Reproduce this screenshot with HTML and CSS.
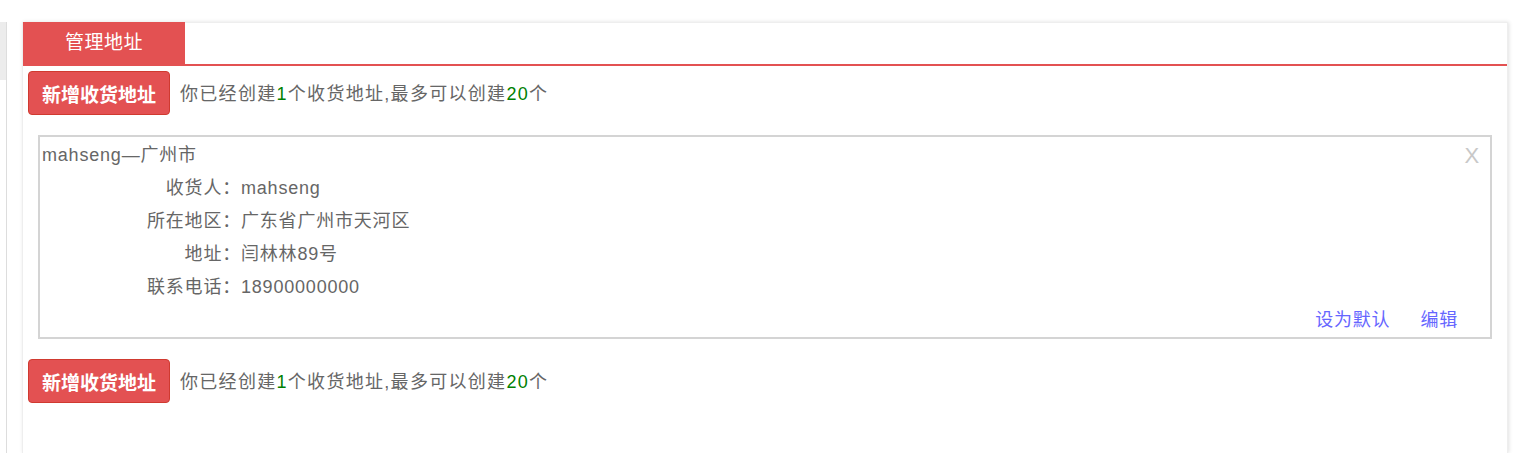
FILE: index.html
```html
<!DOCTYPE HTML>
<html>
<head>
	<meta http-equiv="Content-Type" content="text/html; charset=utf-8">
	<title>管理地址</title>
	<link rel="stylesheet" href="styles.css">
</head>
<body>
	<aside class="side">
		<div class="side-head"></div>
	</aside>

	<section class="panel">
		<div class="tabs">
			<div class="tab">管理地址</div>
		</div>

		<div class="bar">
			<button class="btn-add">新增收货地址</button>
			<span class="tip">你已经创建<em>1</em>个收货地址,最多可以创建<em>20</em>个</span>
		</div>

		<div class="addr">
			<div class="addr-title">
				<span>mahseng—广州市</span>
				<span class="close">X</span>
			</div>
			<div class="addr-row"><label>收货人：</label><span>mahseng</span></div>
			<div class="addr-row"><label>所在地区：</label><span>广东省广州市天河区</span></div>
			<div class="addr-row"><label>地址：</label><span>闫林林89号</span></div>
			<div class="addr-row"><label>联系电话：</label><span>18900000000</span></div>
			<div class="addr-ops">
				<a>设为默认</a>
				<a>编辑</a>
			</div>
		</div>

		<div class="bar">
			<button class="btn-add">新增收货地址</button>
			<span class="tip">你已经创建<em>1</em>个收货地址,最多可以创建<em>20</em>个</span>
		</div>
	</section>
</body>
</html>
```

FILE: styles.css
```css
	body{
		margin: 0;
		background-color: #fff;
		display: flex;
		padding-top: 22px;
		height: 431px;
		overflow: hidden;
		font-family: "Liberation Sans", "Noto Sans CJK SC", sans-serif;
		color: #666;
	}

	.side{
		width: 6px;
		border-right: 1px solid #ddd;
		margin-right: 15px;
	}
	.side-head{
		height: 58px;
		background: #ececec;
	}

	.panel{
		width: 1484px;
		border: 1px solid #eee;
		border-bottom: 0;
		box-shadow: 1px 0 4px rgba(0,0,0,0.12);
	}

	.tabs{
		display: flex;
		height: 41px;
		border-bottom: 2px solid #e35152;
	}
	.tab{
		width: 162px;
		background: #e35152;
		color: #fff;
		font-size: 19px;
		letter-spacing: 0.5px;
		line-height: 42px;
		text-align: center;
		margin-top: -1px;
		height: 42px;
	}

	.bar{
		display: flex;
		align-items: center;
		padding: 5px 0 0 5px;
	}
	.btn-add{
		width: 142px;
		height: 44px;
		padding: 0;
		background: #e35152;
		border: 1px solid #d03a30;
		border-radius: 4px;
		color: #fff;
		font-family: "Liberation Serif", "Noto Sans CJK SC", serif;
		font-weight: bold;
		font-size: 19px;
	}
	.tip{
		margin-left: 10px;
		font-size: 18px;
		letter-spacing: 1.3px;
		margin-top: -3px;
	}
	.tip em{
		font-style: normal;
		color: #008000;
	}

	.addr{
		margin: 20px 15px 15px 15px;
		border: 2px solid #d4d4d4;
		padding: 2px 0 0 2px;
		font-size: 18px;
		letter-spacing: 0.8px;
		line-height: 33px;
	}
	.addr-title{
		display: flex;
		justify-content: space-between;
	}
	.close{
		color: #c8c8c8;
		font-size: 22px;
		margin-right: 10px;
	}
	.addr-row{
		display: flex;
	}
	.addr-row label{
		width: 199px;
		text-align: right;
	}
	.addr-ops{
		display: flex;
		justify-content: flex-end;
		gap: 30px;
		padding-right: 32px;
	}
	.addr-ops a{
		color: #6666ff;
		cursor: pointer;
	}
```
